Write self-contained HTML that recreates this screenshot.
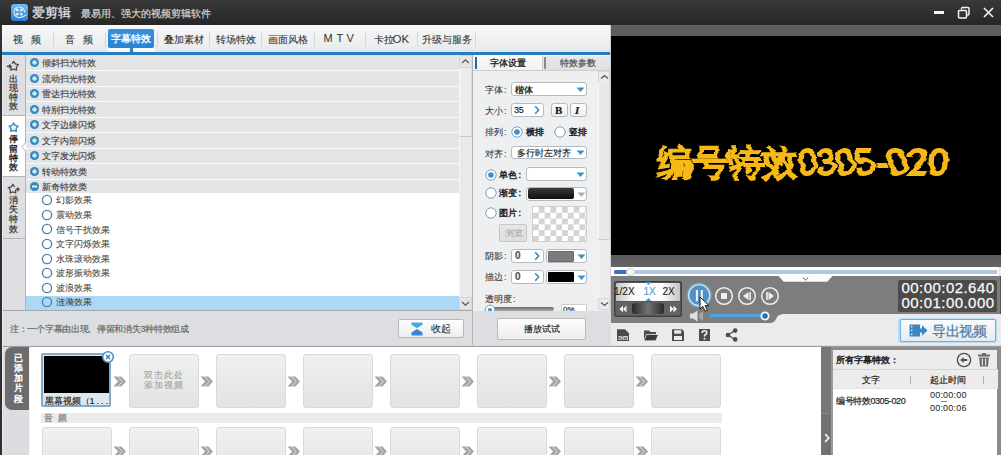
<!DOCTYPE html>
<html><head><meta charset="utf-8"><style>
*{margin:0;padding:0;box-sizing:border-box}
html,body{width:1001px;height:455px;overflow:hidden;background:#ebebeb;font-family:"Liberation Sans",sans-serif;color:#333}
body{position:relative}
.a{position:absolute}
.t{position:absolute;white-space:nowrap;line-height:1;-webkit-text-stroke-width:0.2px}
.f9{font-size:9px}.f10{font-size:10px}
</style></head><body>

<div class="a" style="left:0;top:0;width:1001px;height:25px;background:linear-gradient(#383838,#272727)"></div>
<div class="a" style="left:11px;top:4px;width:17px;height:17px;border-radius:3px;background:linear-gradient(#70bdf3,#2a7fd6);box-shadow:0 0 1px #123"></div>
<svg class="a" style="left:11px;top:4px" width="17" height="17">
<path d="M13.6 8.6A5.3 5.3 0 1 0 8.5 13.6Q12 13.6 15.5 10.6" fill="none" stroke="#d4efff" stroke-width="1.2"/>
<circle cx="6.2" cy="6" r="1.3" fill="#e4f6ff"/><circle cx="10.4" cy="6" r="1.3" fill="#e4f6ff"/>
<circle cx="6.2" cy="10.2" r="1.3" fill="#e4f6ff"/><circle cx="10.4" cy="10.2" r="1.3" fill="#e4f6ff"/>
<circle cx="8.3" cy="8.1" r="0.6" fill="#e4f6ff"/>
</svg>
<div class="t" style="left:32px;top:6px;font-size:13px;color:#e4e4e4;-webkit-text-stroke-width:0.2px">爱剪辑</div>
<div class="t f10" style="left:81px;top:8.5px;color:#d4d4d4">最易用、强大的视频剪辑软件</div>
<div class="a" style="left:934px;top:11px;width:10px;height:2.5px;background:#f4f4f4"></div>
<svg class="a" style="left:957px;top:6px" width="14" height="14" fill="none" stroke="#f4f4f4" stroke-width="1.5">
<path d="M4.5 3.5V2.5Q4.5 1.5 5.5 1.5H11Q12 1.5 12 2.5V8Q12 9 11 9H10.2"/>
<rect x="1.5" y="4.5" width="8" height="7.5" rx="1" fill="#333"/>
</svg>
<svg class="a" style="left:983px;top:7px" width="11" height="11"><path d="M1 1L10 10M10 1L1 10" stroke="#f4f4f4" stroke-width="1.6"/></svg>

<div class="a" style="left:0;top:25px;width:611px;height:27px;background:linear-gradient(#f7f8f9,#e8e9ea)"></div>
<div class="a" style="left:0;top:25px;width:611px;height:1px;background:#fbfbfb"></div>
<div class="a" style="left:53px;top:32px;width:1px;height:15px;background:#d4d6d8"></div>
<div class="a" style="left:105px;top:32px;width:1px;height:15px;background:#d4d6d8"></div>
<div class="a" style="left:157px;top:32px;width:1px;height:15px;background:#d4d6d8"></div>
<div class="a" style="left:209px;top:32px;width:1px;height:15px;background:#d4d6d8"></div>
<div class="a" style="left:261px;top:32px;width:1px;height:15px;background:#d4d6d8"></div>
<div class="a" style="left:314px;top:32px;width:1px;height:15px;background:#d4d6d8"></div>
<div class="a" style="left:365px;top:32px;width:1px;height:15px;background:#d4d6d8"></div>
<div class="a" style="left:417px;top:32px;width:1px;height:15px;background:#d4d6d8"></div>
<div class="a" style="left:475px;top:32px;width:1px;height:15px;background:#d4d6d8"></div>
<div class="a" style="left:0;top:50px;width:611px;height:2px;background:#d9eaf6"></div>
<div class="a" style="left:108px;top:29px;width:46px;height:19px;border-radius:2px;background:linear-gradient(#3593de,#2884d2)"></div>
<div class="a" style="left:108px;top:47.5px;width:22.5px;height:4.5px;border-radius:0 0 4px 2px;background:#f6fafd"></div>
<div class="a" style="left:132.5px;top:47.5px;width:22px;height:4.5px;border-radius:0 0 2px 4px;background:#f6fafd"></div>
<div class="a" style="left:130px;top:47px;width:3px;height:6px;background:#2b82cc"></div>
<div class="a" style="left:0;top:52px;width:611px;height:2.5px;background:#2a7cbe"></div>
<div class="a" style="left:0;top:54.5px;width:611px;height:0.5px;background:#a9cce6"></div>
<div class="t f10" style="left:13px;top:34.5px;color:#363636;-webkit-text-stroke-width:0.1px">视&nbsp;&nbsp;&nbsp;频</div>
<div class="t f10" style="left:65px;top:34.5px;color:#363636;-webkit-text-stroke-width:0.1px">音&nbsp;&nbsp;&nbsp;频</div>
<div class="t f10" style="left:111px;top:34px;color:#fff;-webkit-text-stroke-width:0.3px">字幕特效</div>
<div class="t f10" style="left:163.5px;top:34.5px;color:#363636;-webkit-text-stroke-width:0.1px">叠加素材</div>
<div class="t f10" style="left:215.5px;top:34.5px;color:#363636;-webkit-text-stroke-width:0.1px">转场特效</div>
<div class="t f10" style="left:267.5px;top:34.5px;color:#363636;-webkit-text-stroke-width:0.1px">画面风格</div>
<div class="t f10" style="left:373.5px;top:34.5px;color:#363636;-webkit-text-stroke-width:0.1px">卡拉</div>
<div class="t f10" style="left:421.5px;top:34.5px;color:#363636;-webkit-text-stroke-width:0.1px">升级与服务</div>
<div class="t" style="left:392.6px;top:33.6px;font-size:11.5px;color:#363636;-webkit-text-stroke-width:0.05px">OK</div>
<div class="t" style="left:323.6px;top:33.4px;font-size:11px;color:#363636;-webkit-text-stroke-width:0.05px">M</div>
<div class="t" style="left:336.4px;top:33.4px;font-size:11px;color:#363636;-webkit-text-stroke-width:0.05px">T</div>
<div class="t" style="left:346.6px;top:33.4px;font-size:11px;color:#363636;-webkit-text-stroke-width:0.05px">V</div>
<div class="a" style="left:0;top:55px;width:26px;height:256px;background:#dddfe2"></div>
<div class="a" style="left:25px;top:55px;width:1px;height:256px;background:#b4b4b4"></div>
<div class="a" style="left:0;top:115px;width:25px;height:62px;background:#fff;border-top:1px solid #b4b4b4;border-bottom:1px solid #b4b4b4"></div>
<div class="a" style="left:0;top:238px;width:25px;height:1px;background:#b4b4b4"></div>
<svg class="a" style="left:21px;top:142px" width="5" height="10"><path d="M5 0.5L1 5L5 9.5" fill="#fff" stroke="#b4b4b4" stroke-width="1"/></svg>
<div class="a" style="left:26px;top:55px;width:433px;height:138px;background:#e4e5e7"></div>
<svg class="a" style="left:28.5px;top:57.2px" width="11" height="11"><circle cx="5.5" cy="5.5" r="5.3" fill="#d3e9f6"/><circle cx="5.5" cy="5.5" r="4.5" fill="#3b87bb"/><path d="M3.2 5.5H7.8M5.5 3.2V7.8" stroke="#d2f4ff" stroke-width="2"/></svg>
<div class="t f9" style="left:42px;top:59.0px;color:#444;-webkit-text-stroke-width:0.15px">倾斜扫光特效</div>
<div class="a" style="left:26px;top:70.0px;width:433px;height:1px;background:#fafafa"></div>
<svg class="a" style="left:28.5px;top:72.7px" width="11" height="11"><circle cx="5.5" cy="5.5" r="5.3" fill="#d3e9f6"/><circle cx="5.5" cy="5.5" r="4.5" fill="#3b87bb"/><path d="M3.2 5.5H7.8M5.5 3.2V7.8" stroke="#d2f4ff" stroke-width="2"/></svg>
<div class="t f9" style="left:42px;top:74.5px;color:#444;-webkit-text-stroke-width:0.15px">流动扫光特效</div>
<div class="a" style="left:26px;top:85.5px;width:433px;height:1px;background:#fafafa"></div>
<svg class="a" style="left:28.5px;top:88.2px" width="11" height="11"><circle cx="5.5" cy="5.5" r="5.3" fill="#d3e9f6"/><circle cx="5.5" cy="5.5" r="4.5" fill="#3b87bb"/><path d="M3.2 5.5H7.8M5.5 3.2V7.8" stroke="#d2f4ff" stroke-width="2"/></svg>
<div class="t f9" style="left:42px;top:90.0px;color:#444;-webkit-text-stroke-width:0.15px">雷达扫光特效</div>
<div class="a" style="left:26px;top:101.0px;width:433px;height:1px;background:#fafafa"></div>
<svg class="a" style="left:28.5px;top:103.7px" width="11" height="11"><circle cx="5.5" cy="5.5" r="5.3" fill="#d3e9f6"/><circle cx="5.5" cy="5.5" r="4.5" fill="#3b87bb"/><path d="M3.2 5.5H7.8M5.5 3.2V7.8" stroke="#d2f4ff" stroke-width="2"/></svg>
<div class="t f9" style="left:42px;top:105.5px;color:#444;-webkit-text-stroke-width:0.15px">特别扫光特效</div>
<div class="a" style="left:26px;top:116.5px;width:433px;height:1px;background:#fafafa"></div>
<svg class="a" style="left:28.5px;top:119.2px" width="11" height="11"><circle cx="5.5" cy="5.5" r="5.3" fill="#d3e9f6"/><circle cx="5.5" cy="5.5" r="4.5" fill="#3b87bb"/><path d="M3.2 5.5H7.8M5.5 3.2V7.8" stroke="#d2f4ff" stroke-width="2"/></svg>
<div class="t f9" style="left:42px;top:121.0px;color:#444;-webkit-text-stroke-width:0.15px">文字边缘闪烁</div>
<div class="a" style="left:26px;top:132.0px;width:433px;height:1px;background:#fafafa"></div>
<svg class="a" style="left:28.5px;top:134.7px" width="11" height="11"><circle cx="5.5" cy="5.5" r="5.3" fill="#d3e9f6"/><circle cx="5.5" cy="5.5" r="4.5" fill="#3b87bb"/><path d="M3.2 5.5H7.8M5.5 3.2V7.8" stroke="#d2f4ff" stroke-width="2"/></svg>
<div class="t f9" style="left:42px;top:136.5px;color:#444;-webkit-text-stroke-width:0.15px">文字内部闪烁</div>
<div class="a" style="left:26px;top:147.5px;width:433px;height:1px;background:#fafafa"></div>
<svg class="a" style="left:28.5px;top:150.2px" width="11" height="11"><circle cx="5.5" cy="5.5" r="5.3" fill="#d3e9f6"/><circle cx="5.5" cy="5.5" r="4.5" fill="#3b87bb"/><path d="M3.2 5.5H7.8M5.5 3.2V7.8" stroke="#d2f4ff" stroke-width="2"/></svg>
<div class="t f9" style="left:42px;top:152.0px;color:#444;-webkit-text-stroke-width:0.15px">文字发光闪烁</div>
<div class="a" style="left:26px;top:163.0px;width:433px;height:1px;background:#fafafa"></div>
<svg class="a" style="left:28.5px;top:165.7px" width="11" height="11"><circle cx="5.5" cy="5.5" r="5.3" fill="#d3e9f6"/><circle cx="5.5" cy="5.5" r="4.5" fill="#3b87bb"/><path d="M3.2 5.5H7.8M5.5 3.2V7.8" stroke="#d2f4ff" stroke-width="2"/></svg>
<div class="t f9" style="left:42px;top:167.5px;color:#444;-webkit-text-stroke-width:0.15px">转动特效类</div>
<div class="a" style="left:26px;top:178.5px;width:433px;height:1px;background:#fafafa"></div>
<svg class="a" style="left:28.5px;top:181.2px" width="11" height="11"><circle cx="5.5" cy="5.5" r="5.3" fill="#d3e9f6"/><circle cx="5.5" cy="5.5" r="4.5" fill="#3b87bb"/><path d="M3 5.5H8" stroke="#e0f6ff" stroke-width="2"/></svg>
<div class="t f9" style="left:42px;top:183.0px;color:#444;-webkit-text-stroke-width:0.15px">新奇特效类</div>
<div class="a" style="left:26px;top:193px;width:433px;height:117px;background:#fff"></div>
<div class="a" style="left:26px;top:296px;width:433px;height:14px;background:#acd8f8"></div>
<svg class="a" style="left:41px;top:194.30px" width="12" height="12"><circle cx="6" cy="6" r="4.6" fill="none" stroke="#5583a6" stroke-width="1.4"/></svg>
<div class="t f9" style="left:56px;top:196.40px;color:#484848;-webkit-text-stroke-width:0.1px">幻影效果</div>
<svg class="a" style="left:41px;top:208.86px" width="12" height="12"><circle cx="6" cy="6" r="4.6" fill="none" stroke="#5583a6" stroke-width="1.4"/></svg>
<div class="t f9" style="left:56px;top:210.96px;color:#484848;-webkit-text-stroke-width:0.1px">震动效果</div>
<svg class="a" style="left:41px;top:223.42px" width="12" height="12"><circle cx="6" cy="6" r="4.6" fill="none" stroke="#5583a6" stroke-width="1.4"/></svg>
<div class="t f9" style="left:56px;top:225.52px;color:#484848;-webkit-text-stroke-width:0.1px">信号干扰效果</div>
<svg class="a" style="left:41px;top:237.98px" width="12" height="12"><circle cx="6" cy="6" r="4.6" fill="none" stroke="#5583a6" stroke-width="1.4"/></svg>
<div class="t f9" style="left:56px;top:240.08px;color:#484848;-webkit-text-stroke-width:0.1px">文字闪烁效果</div>
<svg class="a" style="left:41px;top:252.54px" width="12" height="12"><circle cx="6" cy="6" r="4.6" fill="none" stroke="#5583a6" stroke-width="1.4"/></svg>
<div class="t f9" style="left:56px;top:254.64px;color:#484848;-webkit-text-stroke-width:0.1px">水珠滚动效果</div>
<svg class="a" style="left:41px;top:267.10px" width="12" height="12"><circle cx="6" cy="6" r="4.6" fill="none" stroke="#5583a6" stroke-width="1.4"/></svg>
<div class="t f9" style="left:56px;top:269.20px;color:#484848;-webkit-text-stroke-width:0.1px">波形振动效果</div>
<svg class="a" style="left:41px;top:281.66px" width="12" height="12"><circle cx="6" cy="6" r="4.6" fill="none" stroke="#5583a6" stroke-width="1.4"/></svg>
<div class="t f9" style="left:56px;top:283.76px;color:#484848;-webkit-text-stroke-width:0.1px">波浪效果</div>
<svg class="a" style="left:41px;top:296.22px" width="12" height="12"><circle cx="6" cy="6" r="4.6" fill="none" stroke="#5583a6" stroke-width="1.4"/></svg>
<div class="t f9" style="left:56px;top:298.32px;color:#484848;-webkit-text-stroke-width:0.1px">涟漪效果</div>
<div class="t f9" style="left:9px;top:74.5px;color:#3a3a3a;-webkit-text-stroke-width:0.25px">出</div>
<div class="t f9" style="left:9px;top:83.7px;color:#3a3a3a;-webkit-text-stroke-width:0.25px">现</div>
<div class="t f9" style="left:9px;top:92.9px;color:#3a3a3a;-webkit-text-stroke-width:0.25px">特</div>
<div class="t f9" style="left:9px;top:102.1px;color:#3a3a3a;-webkit-text-stroke-width:0.25px">效</div>
<div class="t f9" style="left:9px;top:135.2px;color:#1e1e1e;-webkit-text-stroke-width:0.35px">停</div>
<div class="t f9" style="left:9px;top:144.6px;color:#1e1e1e;-webkit-text-stroke-width:0.35px">留</div>
<div class="t f9" style="left:9px;top:154.0px;color:#1e1e1e;-webkit-text-stroke-width:0.35px">特</div>
<div class="t f9" style="left:9px;top:163.4px;color:#1e1e1e;-webkit-text-stroke-width:0.35px">效</div>
<div class="t f9" style="left:9px;top:195.5px;color:#3a3a3a;-webkit-text-stroke-width:0.25px">消</div>
<div class="t f9" style="left:9px;top:205.4px;color:#3a3a3a;-webkit-text-stroke-width:0.25px">失</div>
<div class="t f9" style="left:9px;top:215.3px;color:#3a3a3a;-webkit-text-stroke-width:0.25px">特</div>
<div class="t f9" style="left:9px;top:225.2px;color:#3a3a3a;-webkit-text-stroke-width:0.25px">效</div>
<svg class="a" style="left:0;top:0;overflow:visible" width="26" height="240"><path d="M12.05 63.93L13.70 61.40L15.35 63.93L18.27 64.72L16.36 67.07L16.52 70.08L13.70 69.00L10.88 70.08L11.04 67.07" fill="none" stroke="#4a4a4a" stroke-width="1.3" stroke-linejoin="round"/><path d="M6.8 66.3H10" stroke="#4a4a4a" stroke-width="1.6"/><path d="M9.2 63.6L12 66.3L9.2 69Z" fill="#4a4a4a"/><path d="M13.60 122.90L15.19 125.42L18.07 126.15L16.17 128.43L16.36 131.40L13.60 130.30L10.84 131.40L11.03 128.43L9.13 126.15L12.01 125.42Z" fill="#e4f6fc" stroke="#3f8db5" stroke-width="1.4" stroke-linejoin="round"/><path d="M15.52 189.95L15.66 192.90L12.90 191.85L10.14 192.90L10.28 189.95L8.43 187.65L11.28 186.88L12.90 184.40L14.52 186.88" fill="none" stroke="#4a4a4a" stroke-width="1.3"/><path d="M15.6 189.3H18" stroke="#4a4a4a" stroke-width="1.6"/><path d="M17.3 186.7L20 189.3L17.3 192Z" fill="#4a4a4a"/></svg>

<div class="a" style="left:459px;top:55px;width:13px;height:256px;background:#e9e9ea;border-left:1px solid #f6f6f6"></div>
<div class="a" style="left:459px;top:67px;width:13px;height:70px;background:#ececed;border-left:1px solid #fafafa;border-right:1px solid #dedede;border-bottom:1px solid #c9c9c9"></div>
<div class="a" style="left:459px;top:55px;width:13px;height:13px;background:#e5e5e5;border:1px solid #d6d6d6"></div>
<svg class="a" style="left:460px;top:57px" width="11" height="9"><path d="M2 6L5.5 2.8L9 6" fill="none" stroke="#555" stroke-width="1.2"/></svg>
<div class="a" style="left:459px;top:297px;width:13px;height:13px;background:#e5e5e5;border:1px solid #d6d6d6"></div>
<svg class="a" style="left:460px;top:299px" width="11" height="9"><path d="M2 3L5.5 6.2L9 3" fill="none" stroke="#555" stroke-width="1.2"/></svg>
<div class="a" style="left:0;top:310px;width:473px;height:1px;background:#a9a9a9"></div>
<div class="a" style="left:0;top:311px;width:473px;height:35px;background:#dddee1"></div>
<div class="t f9" style="left:10px;top:325px;color:#6a6a6a;letter-spacing:-0.3px">注：一个字幕由出现、停留和消失3种特效组成</div>
<div class="a" style="left:398px;top:319px;width:66px;height:19px;border:1px solid #b9b9b9;border-radius:2px;background:linear-gradient(#fefefe,#ededed)"></div>
<svg class="a" style="left:411px;top:321.5px" width="12" height="15"><path d="M0.5 0.5H11.5V2.8L6 6.2L0.5 2.8Z" fill="#4fa6e6"/><path d="M6 7L11.5 10.6V13.5H0.5V10.6Z" fill="#3585cf"/></svg>
<div class="t f10" style="left:430.5px;top:324px;color:#333;-webkit-text-stroke-width:0.1px">收起</div>

<div class="a" style="left:472px;top:55px;width:1px;height:290px;background:#b5b5b5"></div>
<div class="a" style="left:473px;top:55px;width:138px;height:256px;background:#eeeff0"></div>
<div class="a" style="left:473px;top:55px;width:138px;height:1px;background:#f8f8f8"></div>
<div class="a" style="left:473px;top:56px;width:69px;height:14px;background:linear-gradient(#fafafa,#f2f2f2)"></div>
<div class="a" style="left:542px;top:56px;width:69px;height:14px;background:linear-gradient(#e8e8e9,#dfe0e1);border-left:1px solid #cfcfcf"></div>
<div class="a" style="left:473px;top:69.5px;width:138px;height:1px;background:#cdcdcd"></div>
<div class="a" style="left:475px;top:56.5px;width:2px;height:12.5px;background:#1f6da4"></div>
<div class="a" style="left:544px;top:56.5px;width:2px;height:12.5px;background:#8a8a8a"></div>
<div class="t f9" style="left:490px;top:59px;color:#1e1e1e;-webkit-text-stroke-width:0.3px">字体设置</div>
<div class="t f9" style="left:560px;top:59px;color:#4a4a4a">特效参数</div>
<div class="a" style="left:598px;top:71px;width:12px;height:240px;background:#ececec;border-left:1px solid #f6f6f6"></div>
<div class="a" style="left:598px;top:71px;width:12px;height:12px;background:#ececec;border:1px solid #d6d6d6"></div>
<svg class="a" style="left:599px;top:73px" width="11" height="8"><path d="M2 5.5L5.5 2.5L9 5.5" fill="none" stroke="#555" stroke-width="1.2"/></svg>
<div class="a" style="left:598px;top:298px;width:12px;height:12px;background:#ececec;border:1px solid #d6d6d6"></div>
<svg class="a" style="left:599px;top:300px" width="11" height="8"><path d="M2 2.5L5.5 5.5L9 2.5" fill="none" stroke="#555" stroke-width="1.2"/></svg>
<div class="a" style="left:598px;top:82px;width:12px;height:158px;background:#e8e8e9;border-left:1px solid #f8f8f8;border-right:1px solid #dedede;border-bottom:1px solid #cacaca"></div>
<div class="a" style="left:610px;top:25px;width:1px;height:321px;background:#cfcfcf"></div>
<div class="t f9" style="left:484.5px;top:86px;color:#3a3a3a;-webkit-text-stroke-width:0.1px">字体<span style="margin-left:1.5px">:</span></div>
<div class="a" style="left:511px;top:82px;width:76px;height:14px;background:#fff;border:1px solid #b6babe;border-radius:3px;"></div>
<div class="t f9" style="left:515px;top:86px;color:#1a1a1a;-webkit-text-stroke-width:0.3px">楷体</div>
<svg class="a" style="left:576px;top:87px" width="9" height="6"><path d="M0.5 0.5H8.5L4.5 5Z" fill="#3a94c6"/></svg>
<div class="t f9" style="left:484.5px;top:107px;color:#3a3a3a;-webkit-text-stroke-width:0.1px">大小<span style="margin-left:1.5px">:</span></div>
<div class="a" style="left:511px;top:103px;width:33px;height:14px;background:#fff;border:1px solid #b6babe;border-radius:3px;"></div>
<div class="t" style="left:514px;top:106px;font-size:9px;color:#222;letter-spacing:-0.3px">35</div>
<svg class="a" style="left:534px;top:105px" width="6" height="10"><path d="M1.2 1.2L4.6 5L1.2 8.8" fill="none" stroke="#3b8fc8" stroke-width="1.7"/></svg>
<div class="a" style="left:551px;top:103px;width:17px;height:14px;background:linear-gradient(#fefefe,#eeeeee);border:1px solid #b6babe;border-radius:3px"></div>
<div class="t" style="left:555px;top:104.5px;font-size:11px;font-weight:bold;font-family:'Liberation Serif',serif;color:#1a1a1a">B</div>
<div class="a" style="left:570px;top:103px;width:17px;height:14px;background:linear-gradient(#fefefe,#eeeeee);border:1px solid #b6babe;border-radius:3px"></div>
<div class="t" style="left:575px;top:104.5px;font-size:11px;font-weight:bold;font-style:italic;font-family:'Liberation Serif',serif;color:#1a1a1a">I</div>
<div class="t f9" style="left:484.5px;top:128px;color:#3a3a3a;-webkit-text-stroke-width:0.1px">排列<span style="margin-left:1.5px">:</span></div>
<svg class="a" style="left:510.5px;top:126px" width="12" height="12"><circle cx="6" cy="6" r="5.2" fill="#fff" stroke="#7b9db8" stroke-width="1"/><circle cx="6" cy="6" r="2.8" fill="#3a90d4"/></svg>
<div class="t f9" style="left:526px;top:128px;color:#1a1a1a;-webkit-text-stroke-width:0.4px">横排</div>
<svg class="a" style="left:553.5px;top:126px" width="12" height="12"><circle cx="6" cy="6" r="5.2" fill="#fff" stroke="#7b9db8" stroke-width="1"/></svg>
<div class="t f9" style="left:569px;top:128px;color:#1a1a1a;-webkit-text-stroke-width:0.4px">竖排</div>
<div class="t f9" style="left:484.5px;top:149.5px;color:#3a3a3a;-webkit-text-stroke-width:0.1px">对齐<span style="margin-left:1.5px">:</span></div>
<div class="a" style="left:511px;top:146px;width:76px;height:13px;background:#fff;border:1px solid #b6babe;border-radius:3px;"></div>
<div class="t f9" style="left:516.5px;top:149px;color:#1e1e1e;-webkit-text-stroke-width:0.15px">多行时左对齐</div>
<svg class="a" style="left:576px;top:150px" width="9" height="6"><path d="M0.5 0.5H8.5L4.5 5Z" fill="#3a94c6"/></svg>
<svg class="a" style="left:484.5px;top:168.5px" width="12" height="12"><circle cx="6" cy="6" r="5.2" fill="#fff" stroke="#7b9db8" stroke-width="1"/><circle cx="6" cy="6" r="2.8" fill="#3a90d4"/></svg>
<div class="t f9" style="left:499px;top:170.5px;color:#1a1a1a;-webkit-text-stroke-width:0.4px">单色<span style="margin-left:1.5px">:</span></div>
<div class="a" style="left:526px;top:167px;width:61px;height:14px;background:#fff;border:1px solid #b6babe;border-radius:3px;"></div>
<svg class="a" style="left:576px;top:172px" width="9" height="6"><path d="M0.5 0.5H8.5L4.5 5Z" fill="#3a94c6"/></svg>
<svg class="a" style="left:484.5px;top:187px" width="12" height="12"><circle cx="6" cy="6" r="5.2" fill="#fff" stroke="#7b9db8" stroke-width="1"/></svg>
<div class="t f9" style="left:499px;top:189px;color:#1a1a1a;-webkit-text-stroke-width:0.4px">渐变<span style="margin-left:1.5px">:</span></div>
<div class="a" style="left:526px;top:187px;width:61px;height:14px;background:#fff;border:1px solid #b6babe;border-radius:3px;"></div>
<div class="a" style="left:527.5px;top:188px;width:46px;height:11px;border-radius:2px;background:linear-gradient(#3a3a3a,#0e0e0e)"></div>
<svg class="a" style="left:577px;top:192px" width="9" height="6"><path d="M0.5 0.5H8.5L4.5 5Z" fill="#b0b0b0"/></svg>
<svg class="a" style="left:484.5px;top:206.5px" width="12" height="12"><circle cx="6" cy="6" r="5.2" fill="#fff" stroke="#7b9db8" stroke-width="1"/></svg>
<div class="t f9" style="left:499px;top:208.5px;color:#1a1a1a;-webkit-text-stroke-width:0.4px">图片<span style="margin-left:1.5px">:</span></div>
<div class="a" style="left:532px;top:206px;width:55px;height:36px;border:1px solid #d0d0d0;background-color:#fff;background-image:linear-gradient(45deg,#d2d2d2 25%,transparent 25%,transparent 75%,#d2d2d2 75%),linear-gradient(45deg,#d2d2d2 25%,transparent 25%,transparent 75%,#d2d2d2 75%);background-size:11.6px 11.6px;background-position:0 0,5.8px 5.8px"></div>
<div class="a" style="left:499px;top:224px;width:28px;height:18px;border:1px solid #c6c6c6;border-radius:2px;background:linear-gradient(#e8e8e8,#dedede)"></div>
<div class="t f9" style="left:504.5px;top:229px;color:#a6a6a6;-webkit-text-stroke-width:0.1px">浏览</div>
<div class="t f9" style="left:484.5px;top:251.5px;color:#3a3a3a;-webkit-text-stroke-width:0.1px">阴影<span style="margin-left:1.5px">:</span></div>
<div class="a" style="left:511px;top:249px;width:33px;height:14px;background:#fff;border:1px solid #b6babe;border-radius:3px;"></div>
<div class="t" style="left:515px;top:251px;font-size:10px;font-weight:bold;color:#555">0</div>
<svg class="a" style="left:534px;top:251px" width="6" height="10"><path d="M1.2 1.2L4.6 5L1.2 8.8" fill="none" stroke="#3b8fc8" stroke-width="1.7"/></svg>
<div class="a" style="left:546px;top:249px;width:41px;height:14px;background:#fff;border:1px solid #b6babe;border-radius:3px;"></div>
<div class="a" style="left:548px;top:250.5px;width:26px;height:11px;background:#7c7c7c;border:1px solid #6a6a6a;border-radius:1px"></div>
<svg class="a" style="left:577px;top:254px" width="9" height="6"><path d="M0.5 0.5H8.5L4.5 5Z" fill="#3a94c6"/></svg>
<div class="t f9" style="left:484.5px;top:273px;color:#3a3a3a;-webkit-text-stroke-width:0.1px">描边<span style="margin-left:1.5px">:</span></div>
<div class="a" style="left:511px;top:270px;width:33px;height:14px;background:#fff;border:1px solid #b6babe;border-radius:3px;"></div>
<div class="t" style="left:515px;top:272px;font-size:10px;font-weight:bold;color:#555">0</div>
<svg class="a" style="left:534px;top:272px" width="6" height="10"><path d="M1.2 1.2L4.6 5L1.2 8.8" fill="none" stroke="#3b8fc8" stroke-width="1.7"/></svg>
<div class="a" style="left:546px;top:270px;width:41px;height:14px;background:#fff;border:1px solid #b6babe;border-radius:3px;"></div>
<div class="a" style="left:548px;top:272px;width:26px;height:10px;background:#000;border-radius:1px"></div>
<svg class="a" style="left:577px;top:275px" width="9" height="6"><path d="M0.5 0.5H8.5L4.5 5Z" fill="#3a94c6"/></svg>
<div class="t f9" style="left:484.5px;top:294.5px;color:#3a3a3a;-webkit-text-stroke-width:0.1px">透明度<span style="margin-left:1.5px">:</span></div>
<div class="a" style="left:487px;top:307px;width:67px;height:4px;border-radius:2px;background:linear-gradient(#6a6a6a,#a8a8a8)"></div>
<svg class="a" style="left:484px;top:304px" width="12" height="12"><circle cx="6" cy="6" r="4.8" fill="#fff" stroke="#7d9cb4" stroke-width="1"/><circle cx="6" cy="6" r="2" fill="#3a90d4"/></svg>
<div class="a" style="left:561px;top:304px;width:26px;height:10px;background:#fff;border:1px solid #d0d0d0"></div>
<div class="t" style="left:563px;top:306px;font-size:8px;color:#333">0%</div>
<div class="a" style="left:473px;top:311px;width:138px;height:35px;background:#dddee1"></div>
<div class="a" style="left:497px;top:318px;width:89px;height:22px;border:1px solid #b9b9b9;border-radius:2px;background:linear-gradient(#fefefe,#ededed)"></div>
<div class="t f9" style="left:524px;top:325px;color:#222;-webkit-text-stroke-width:0.15px">播放试试</div>

<div class="a" style="left:611px;top:25px;width:390px;height:11px;background:#5e5e5e"></div>
<div class="a" style="left:611px;top:36px;width:390px;height:219px;background:#000"></div>
<svg class="a" style="left:612px;top:36px" width="389" height="219">
<defs><filter id="wv" x="-5%" y="-30%" width="110%" height="160%"><feTurbulence type="fractalNoise" baseFrequency="0.01 0.08" numOctaves="2" seed="9" result="n"/>
<feColorMatrix in="n" type="matrix" values="1 0 0 0 0  0 0 0 0 0.5  0 0 0 0 0.5  0 0 0 0 1" result="m"/>
<feDisplacementMap in="SourceGraphic" in2="m" scale="14" xChannelSelector="R" yChannelSelector="G"/></filter></defs>
<g filter="url(#wv)"><text x="45" y="0" transform="translate(0 139) scale(1 1.3)" font-family="Liberation Sans" font-size="28" fill="#f6b917" textLength="290" lengthAdjust="spacingAndGlyphs" stroke="#f6b917" stroke-width="1.7">编号特效0305-020</text></g>
</svg>
<div class="a" style="left:611px;top:255px;width:390px;height:12px;background:linear-gradient(#5a5a5a,#646464)"></div>
<div class="a" style="left:611px;top:267px;width:387px;height:9px;background:#fff"></div><div class="a" style="left:611px;top:276px;width:1px;height:47px;background:#7b7d7f"></div>
<div class="a" style="left:614px;top:269.5px;width:383px;height:4px;background:#b3c7e3"></div>
<div class="a" style="left:614px;top:269.5px;width:17px;height:4px;background:#3e6cc4;border-radius:2px 0 0 2px"></div>
<div class="a" style="left:626px;top:267.5px;width:8.5px;height:8.5px;border-radius:50%;background:#fbfbf8;border:1px solid #d0d0d0"></div>


<svg class="a" style="left:612px;top:276px" width="389" height="48">
<path d="M0 0H388V38.4H169.5Q166 38.4 164.5 42Q162.5 47 158 47H0Z" fill="#7b7d7f"/>
<path d="M388 0H389V38H388Z" fill="#555"/>
<path d="M166.5 0H220.5L215.8 5.2Q215.2 5.8 214.3 5.8H172.7Q171.8 5.8 171.2 5.2Z" fill="#fbfbfb"/>
<path d="M190.8 1.6L193.5 4L196.2 1.6" stroke="#4a4a4a" fill="none" stroke-width="0.9"/>
</svg>
<div class="a" style="left:614px;top:281px;width:68px;height:36px;border-radius:3px;background:#555;box-shadow:inset 0 0 0 1px #3e3e3e"></div>
<div class="a" style="left:616px;top:283px;width:64px;height:18px;border-radius:1px;background:linear-gradient(90deg,#c4c4c4,#fdfdfd 28%,#fdfdfd 72%,#c4c4c4)"></div>
<div class="t" style="left:614px;top:287px;font-size:10px;color:#1a1a1a;-webkit-text-stroke-width:0.1px">1/2X</div>
<div class="t" style="left:643.5px;top:287px;font-size:10px;color:#4d9bd0;-webkit-text-stroke-width:0.1px">1X</div>
<div class="t" style="left:662.5px;top:287px;font-size:10px;color:#1a1a1a;-webkit-text-stroke-width:0.1px">2X</div>
<svg class="a" style="left:645px;top:282px" width="7" height="20"><path d="M0.5 0H6.5L3.5 3Z" fill="#4a98d0"/><path d="M0.5 19H6.5L3.5 16Z" fill="#4a98d0"/></svg>
<div class="a" style="left:616px;top:302px;width:64px;height:13px;background:#636363"></div>
<div class="a" style="left:632px;top:303px;width:32px;height:11px;border-radius:3px;background:linear-gradient(90deg,#2a2a2a,#737373 50%,#2a2a2a)"></div>
<svg class="a" style="left:619px;top:304px" width="62" height="10">
<path d="M0.5 5L4 1.5V8.5ZM4 5L7.5 1.5V8.5Z" fill="#f2f2f2"/><path d="M51 1.5L54.5 5L51 8.5ZM54.5 1.5L58 5L54.5 8.5Z" fill="#f2f2f2"/>
</svg>
<svg class="a" style="left:686px;top:282px" width="27" height="27">
<circle cx="13.2" cy="13.2" r="12" fill="none" stroke="#7fcff5" stroke-width="1.4" opacity="0.35"/>
<circle cx="13.2" cy="13.2" r="10.6" fill="#5690c0" stroke="#b2eeff" stroke-width="1.4"/>
<rect x="9.9" y="8" width="2" height="11.2" fill="#e6f6ff"/><rect x="14.8" y="8" width="2" height="11.2" fill="#e6f6ff"/>
</svg>
<svg class="a" style="left:713px;top:284.5px" width="80" height="22" fill="none" stroke="#f0f0f0" stroke-width="1.5">
<circle cx="11" cy="11" r="8.3"/><rect x="8" y="8" width="6" height="6" fill="#f0f0f0" stroke="none"/>
<circle cx="34" cy="11" r="8.3"/><path d="M30 11L35.5 7V15Z" fill="#f0f0f0" stroke="none"/><rect x="36.3" y="7" width="1.6" height="8" fill="#f0f0f0" stroke="none"/>
<circle cx="57" cy="11" r="8.3"/><rect x="53.2" y="7" width="1.6" height="8" fill="#f0f0f0" stroke="none"/><path d="M55.5 7L61 11L55.5 15Z" fill="#f0f0f0" stroke="none"/>
</svg>
<svg class="a" style="left:689px;top:310px" width="16" height="12"><path d="M1 3.5H4L8.5 0.5V11.5L4 8.5H1Z" fill="#e0e0e0"/><path d="M10.5 3.5L14 1.5V10.5L10.5 8.5Z" fill="#aaaaaa"/></svg>
<div class="a" style="left:709px;top:314.3px;width:56px;height:3px;border-radius:1.5px;background:#4ba2e2"></div>
<svg class="a" style="left:759px;top:310px" width="12" height="12"><circle cx="6" cy="6" r="3.6" fill="#2f6d9c" stroke="#f4f8ff" stroke-width="1.8"/></svg>
<svg class="a" style="left:699.3px;top:296.3px" width="12" height="17"><path d="M1 1V13L3.8 10.4L6.2 15.2L8.4 14.2L6.1 9.6H10Z" fill="#fff" stroke="#1e1e1e" stroke-width="1"/></svg>
<div class="a" style="left:897.5px;top:280px;width:99.5px;height:32px;border-radius:2px;background:#4b4b4b"></div>
<div class="t" style="left:901.5px;top:280.3px;font-size:15px;color:#fafafa;letter-spacing:0.45px;-webkit-text-stroke-width:0.25px">00:00:02.640</div>
<div class="t" style="left:901.5px;top:295px;font-size:15px;color:#fafafa;letter-spacing:0.45px;-webkit-text-stroke-width:0.25px">00:01:00.000</div>


<div class="a" style="left:611px;top:323px;width:390px;height:23px;background:#ebebed"></div>
<div class="a" style="left:782px;top:314.4px;width:219px;height:9px;background:#ebebed"></div>

<div class="a" style="left:898px;top:317.5px;width:99px;height:25.5px;border-radius:3px;background:#b6dcf6"></div>
<div class="a" style="left:899.5px;top:319px;width:96px;height:22.5px;border-radius:2px;background:linear-gradient(#fbfcfd,#e7e9eb);border:1px solid #72aee0"></div>
<svg class="a" style="left:908.5px;top:323.5px" width="20" height="13"><rect x="0.5" y="0.5" width="10.5" height="12" fill="#3b88c2"/><rect x="2" y="2" width="1.4" height="1.4" fill="#d8ecf8"/><rect x="2" y="5.8" width="1.4" height="1.4" fill="#d8ecf8"/><rect x="2" y="9.6" width="1.4" height="1.4" fill="#d8ecf8"/><path d="M9 4.5H13V1.2L18.5 6.5L13 11.8V8.5H9Z" fill="#3b88c2"/></svg>
<div class="t" style="left:932px;top:323.5px;font-size:14px;color:#4a7ca4;letter-spacing:-0.4px;-webkit-text-stroke-width:0.25px">导出视频</div>
<svg class="a" style="left:616px;top:328px" width="125" height="15" fill="#4c4c4c">
<path d="M1 1.2H9L13 5.2V13H1Z"/><rect x="2" y="8" width="10" height="4" fill="#d8d8d8"/><path d="M2.5 11.5V8.7L4.3 11.5V8.7M5.5 8.7H7.3M5.5 10.1H7.1M5.5 11.5H7.3M8 8.7L8.7 11.5L9.5 9.5L10.3 11.5L11 8.7" stroke="#4c4c4c" stroke-width="0.7" fill="none"/>
<path d="M28 2.5H33L34.5 4H40V12.8H28Z"/><path d="M30.5 6.5H42.5L39.8 12.8H28Z" fill="#3a3a3a" stroke="#ececec" stroke-width="0.8"/>
<path d="M56 1.2H66L68 3.2V13H56Z"/><rect x="58.2" y="2.2" width="7" height="3.5" fill="#ececec"/><rect x="58" y="8" width="8" height="4" fill="#ececec"/>
<rect x="83" y="1" width="11" height="12"/><path d="M86.2 5Q86.2 2.8 88.5 2.8Q90.8 2.8 90.8 4.8Q90.8 6.2 88.6 7.2V8.6" fill="none" stroke="#f4f4f4" stroke-width="1.6"/><rect x="87.7" y="9.8" width="1.7" height="1.7" fill="#f4f4f4"/>
<circle cx="112" cy="7" r="2.3"/><circle cx="119.2" cy="2.6" r="2.3"/><circle cx="119.2" cy="11.4" r="2.3"/><path d="M112 7L119 2.5M112 7L119 11.5" stroke="#4c4c4c" stroke-width="1.3"/>
</svg>

<div class="a" style="left:0;top:345px;width:1001px;height:1px;background:#dcdcdc"></div>
<div class="a" style="left:0;top:346px;width:1001px;height:1px;background:#9c9c9c"></div>
<div class="a" style="left:0;top:347px;width:30px;height:108px;background:#dcdde0"></div>
<div class="a" style="left:29px;top:347px;width:1px;height:108px;background:#f2f2f2"></div>
<div class="a" style="left:5px;top:346.5px;width:24px;height:63px;border-radius:7px 0 0 7px;background:#6c6c6c"></div>
<div class="a" style="left:30px;top:347px;width:791px;height:108px;background:#fff"></div>
<div class="a" style="left:41.5px;top:427px;width:70px;height:54px;border:1px solid #d9d9d9;border-radius:3px;background:linear-gradient(#f0f0f0,#e3e3e3)"></div>
<svg class="a" style="left:112.5px;top:376.1px" width="14" height="11"><path d="M0.5 0.5H4.5L9 5.5L4.5 10.5H0.5L5 5.5Z" fill="#a6a6a6"/><path d="M5 0.5H8.5L13 5.5L8.5 10.5H5L9.5 5.5Z" fill="#a6a6a6"/></svg>
<svg class="a" style="left:112.5px;top:446.3px" width="14" height="11"><path d="M0.5 0.5H4.5L9 5.5L4.5 10.5H0.5L5 5.5Z" fill="#a6a6a6"/><path d="M5 0.5H8.5L13 5.5L8.5 10.5H5L9.5 5.5Z" fill="#a6a6a6"/></svg>
<div class="a" style="left:128.5px;top:353.5px;width:70px;height:54px;border:1px solid #d9d9d9;border-radius:3px;background:linear-gradient(#f0f0f0,#e3e3e3)"></div>
<div class="a" style="left:128.5px;top:427px;width:70px;height:54px;border:1px solid #d9d9d9;border-radius:3px;background:linear-gradient(#f0f0f0,#e3e3e3)"></div>
<svg class="a" style="left:199.5px;top:376.1px" width="14" height="11"><path d="M0.5 0.5H4.5L9 5.5L4.5 10.5H0.5L5 5.5Z" fill="#a6a6a6"/><path d="M5 0.5H8.5L13 5.5L8.5 10.5H5L9.5 5.5Z" fill="#a6a6a6"/></svg>
<svg class="a" style="left:199.5px;top:446.3px" width="14" height="11"><path d="M0.5 0.5H4.5L9 5.5L4.5 10.5H0.5L5 5.5Z" fill="#a6a6a6"/><path d="M5 0.5H8.5L13 5.5L8.5 10.5H5L9.5 5.5Z" fill="#a6a6a6"/></svg>
<div class="a" style="left:215.5px;top:353.5px;width:70px;height:54px;border:1px solid #d9d9d9;border-radius:3px;background:linear-gradient(#f0f0f0,#e3e3e3)"></div>
<div class="a" style="left:215.5px;top:427px;width:70px;height:54px;border:1px solid #d9d9d9;border-radius:3px;background:linear-gradient(#f0f0f0,#e3e3e3)"></div>
<svg class="a" style="left:286.5px;top:376.1px" width="14" height="11"><path d="M0.5 0.5H4.5L9 5.5L4.5 10.5H0.5L5 5.5Z" fill="#a6a6a6"/><path d="M5 0.5H8.5L13 5.5L8.5 10.5H5L9.5 5.5Z" fill="#a6a6a6"/></svg>
<svg class="a" style="left:286.5px;top:446.3px" width="14" height="11"><path d="M0.5 0.5H4.5L9 5.5L4.5 10.5H0.5L5 5.5Z" fill="#a6a6a6"/><path d="M5 0.5H8.5L13 5.5L8.5 10.5H5L9.5 5.5Z" fill="#a6a6a6"/></svg>
<div class="a" style="left:302.5px;top:353.5px;width:70px;height:54px;border:1px solid #d9d9d9;border-radius:3px;background:linear-gradient(#f0f0f0,#e3e3e3)"></div>
<div class="a" style="left:302.5px;top:427px;width:70px;height:54px;border:1px solid #d9d9d9;border-radius:3px;background:linear-gradient(#f0f0f0,#e3e3e3)"></div>
<svg class="a" style="left:373.5px;top:376.1px" width="14" height="11"><path d="M0.5 0.5H4.5L9 5.5L4.5 10.5H0.5L5 5.5Z" fill="#a6a6a6"/><path d="M5 0.5H8.5L13 5.5L8.5 10.5H5L9.5 5.5Z" fill="#a6a6a6"/></svg>
<svg class="a" style="left:373.5px;top:446.3px" width="14" height="11"><path d="M0.5 0.5H4.5L9 5.5L4.5 10.5H0.5L5 5.5Z" fill="#a6a6a6"/><path d="M5 0.5H8.5L13 5.5L8.5 10.5H5L9.5 5.5Z" fill="#a6a6a6"/></svg>
<div class="a" style="left:389.5px;top:353.5px;width:70px;height:54px;border:1px solid #d9d9d9;border-radius:3px;background:linear-gradient(#f0f0f0,#e3e3e3)"></div>
<div class="a" style="left:389.5px;top:427px;width:70px;height:54px;border:1px solid #d9d9d9;border-radius:3px;background:linear-gradient(#f0f0f0,#e3e3e3)"></div>
<svg class="a" style="left:460.5px;top:376.1px" width="14" height="11"><path d="M0.5 0.5H4.5L9 5.5L4.5 10.5H0.5L5 5.5Z" fill="#a6a6a6"/><path d="M5 0.5H8.5L13 5.5L8.5 10.5H5L9.5 5.5Z" fill="#a6a6a6"/></svg>
<svg class="a" style="left:460.5px;top:446.3px" width="14" height="11"><path d="M0.5 0.5H4.5L9 5.5L4.5 10.5H0.5L5 5.5Z" fill="#a6a6a6"/><path d="M5 0.5H8.5L13 5.5L8.5 10.5H5L9.5 5.5Z" fill="#a6a6a6"/></svg>
<div class="a" style="left:476.5px;top:353.5px;width:70px;height:54px;border:1px solid #d9d9d9;border-radius:3px;background:linear-gradient(#f0f0f0,#e3e3e3)"></div>
<div class="a" style="left:476.5px;top:427px;width:70px;height:54px;border:1px solid #d9d9d9;border-radius:3px;background:linear-gradient(#f0f0f0,#e3e3e3)"></div>
<svg class="a" style="left:547.5px;top:376.1px" width="14" height="11"><path d="M0.5 0.5H4.5L9 5.5L4.5 10.5H0.5L5 5.5Z" fill="#a6a6a6"/><path d="M5 0.5H8.5L13 5.5L8.5 10.5H5L9.5 5.5Z" fill="#a6a6a6"/></svg>
<svg class="a" style="left:547.5px;top:446.3px" width="14" height="11"><path d="M0.5 0.5H4.5L9 5.5L4.5 10.5H0.5L5 5.5Z" fill="#a6a6a6"/><path d="M5 0.5H8.5L13 5.5L8.5 10.5H5L9.5 5.5Z" fill="#a6a6a6"/></svg>
<div class="a" style="left:563.5px;top:353.5px;width:70px;height:54px;border:1px solid #d9d9d9;border-radius:3px;background:linear-gradient(#f0f0f0,#e3e3e3)"></div>
<div class="a" style="left:563.5px;top:427px;width:70px;height:54px;border:1px solid #d9d9d9;border-radius:3px;background:linear-gradient(#f0f0f0,#e3e3e3)"></div>
<svg class="a" style="left:634.5px;top:376.1px" width="14" height="11"><path d="M0.5 0.5H4.5L9 5.5L4.5 10.5H0.5L5 5.5Z" fill="#a6a6a6"/><path d="M5 0.5H8.5L13 5.5L8.5 10.5H5L9.5 5.5Z" fill="#a6a6a6"/></svg>
<svg class="a" style="left:634.5px;top:446.3px" width="14" height="11"><path d="M0.5 0.5H4.5L9 5.5L4.5 10.5H0.5L5 5.5Z" fill="#a6a6a6"/><path d="M5 0.5H8.5L13 5.5L8.5 10.5H5L9.5 5.5Z" fill="#a6a6a6"/></svg>
<div class="a" style="left:650.5px;top:353.5px;width:70px;height:54px;border:1px solid #d9d9d9;border-radius:3px;background:linear-gradient(#f0f0f0,#e3e3e3)"></div>
<div class="a" style="left:650.5px;top:427px;width:70px;height:54px;border:1px solid #d9d9d9;border-radius:3px;background:linear-gradient(#f0f0f0,#e3e3e3)"></div>
<div class="a" style="left:41.3px;top:353.4px;width:69.7px;height:54px;border:2px solid #82aacb;border-radius:2px;background:#dfe6ec"></div>
<div class="a" style="left:44px;top:356px;width:64.8px;height:36.5px;background:#000"></div>
<div class="t f9" style="left:44.5px;top:396.5px;color:#1a1a1a;-webkit-text-stroke-width:0.15px">黑幕视频（<span style="letter-spacing:2px">1...</span></div>
<svg class="a" style="left:101px;top:350px" width="14" height="14"><circle cx="7" cy="7" r="5.3" fill="#fff" stroke="#4a8fc8" stroke-width="1.6"/><path d="M5 5L9 9M9 5L5 9" stroke="#3a7fbf" stroke-width="1.4"/></svg>
<div class="a" style="left:41px;top:412.5px;width:681px;height:10px;background:#ebebeb"></div>
<div class="t f9" style="left:43.5px;top:414.2px;color:#7c7c7c;letter-spacing:5px">音频</div>
<div class="t f9" style="left:143.5px;top:371px;color:#a2a2a2;letter-spacing:1px;-webkit-text-stroke-width:0.1px">双击此处</div>
<div class="t f9" style="left:143.5px;top:381.3px;color:#a2a2a2;letter-spacing:1px;-webkit-text-stroke-width:0.1px">添加视频</div>
<div class="t f9" style="left:13.5px;top:353.5px;color:#fff;-webkit-text-stroke-width:0.45px">已</div>
<div class="t f9" style="left:13.5px;top:363.8px;color:#fff;-webkit-text-stroke-width:0.45px">添</div>
<div class="t f9" style="left:13.5px;top:374.1px;color:#fff;-webkit-text-stroke-width:0.45px">加</div>
<div class="t f9" style="left:13.5px;top:384.4px;color:#fff;-webkit-text-stroke-width:0.45px">片</div>
<div class="t f9" style="left:13.5px;top:394.7px;color:#fff;-webkit-text-stroke-width:0.45px">段</div>
<div class="a" style="left:0;top:25px;width:1.5px;height:430px;background:#303030"></div><div class="a" style="left:1.5px;top:55px;width:1px;height:400px;background:#f4f4f4;opacity:0.6"></div>

<div class="a" style="left:821px;top:347px;width:10px;height:108px;background:#777"></div>
<div class="a" style="left:821px;top:413px;width:9px;height:42px;border-radius:0 3px 0 0;background:#727272;border-top:1px solid #8a8a8a;border-right:1px solid #6a6a6a"></div>
<svg class="a" style="left:822.5px;top:433px" width="8" height="10"><path d="M2.2 1.2L5.8 5L2.2 8.8" stroke="#f4f4f4" stroke-width="1.7" fill="none"/></svg>
<div class="a" style="left:831px;top:346.5px;width:170px;height:109px;background:#8c8c8c"></div>
<div class="a" style="left:831px;top:350px;width:2px;height:105px;background:#9a9a9a"></div>
<div class="a" style="left:833px;top:350px;width:164px;height:105px;background:#fff"></div>
<div class="a" style="left:833px;top:350px;width:164px;height:20px;background:#ececec"></div>
<div class="a" style="left:833px;top:369px;width:165px;height:1px;background:#d4d4d4"></div>
<div class="t f9" style="left:836px;top:356px;color:#1e1e1e;-webkit-text-stroke-width:0.45px">所有字幕特效：</div>
<svg class="a" style="left:956px;top:352px" width="16" height="16"><circle cx="8" cy="8" r="6.6" fill="none" stroke="#505050" stroke-width="1.4"/><path d="M4.2 8L7.6 5V7H11.2V9H7.6V11Z" fill="#505050"/></svg>
<svg class="a" style="left:978px;top:353px" width="12" height="14" fill="#6a6a6a"><rect x="0" y="1.5" width="12" height="2"/><rect x="4" y="0" width="4" height="2"/><path d="M1.2 4.5H10.8L10 13.5H2Z"/><rect x="3.8" y="5.5" width="1.1" height="7" fill="#ececec"/><rect x="7.1" y="5.5" width="1.1" height="7" fill="#ececec"/></svg>
<div class="a" style="left:833px;top:370px;width:165px;height:19px;background:#ececec"></div>
<div class="a" style="left:833px;top:388px;width:165px;height:1px;background:#e2e2e2"></div>
<div class="t f9" style="left:862px;top:375.5px;color:#222">文字</div>
<div class="t f9" style="left:929.5px;top:375.5px;color:#222">起止时间</div>
<div class="a" style="left:910px;top:376px;width:1px;height:8px;background:#b0b0b0"></div>
<div class="a" style="left:983px;top:376px;width:1px;height:8px;background:#b0b0b0"></div>
<div class="t f9" style="left:836px;top:397px;color:#222;letter-spacing:-0.4px">编号特效0305-020</div>
<div class="t" style="left:930px;top:390.5px;font-size:9px;color:#222;letter-spacing:0.2px;-webkit-text-stroke-width:0">00:00:00</div>
<div class="t" style="left:941px;top:397px;font-size:9px;color:#222;-webkit-text-stroke-width:0">--</div>
<div class="t" style="left:930px;top:403.5px;font-size:9px;color:#222;letter-spacing:0.2px;-webkit-text-stroke-width:0">00:00:06</div>

</body></html>
